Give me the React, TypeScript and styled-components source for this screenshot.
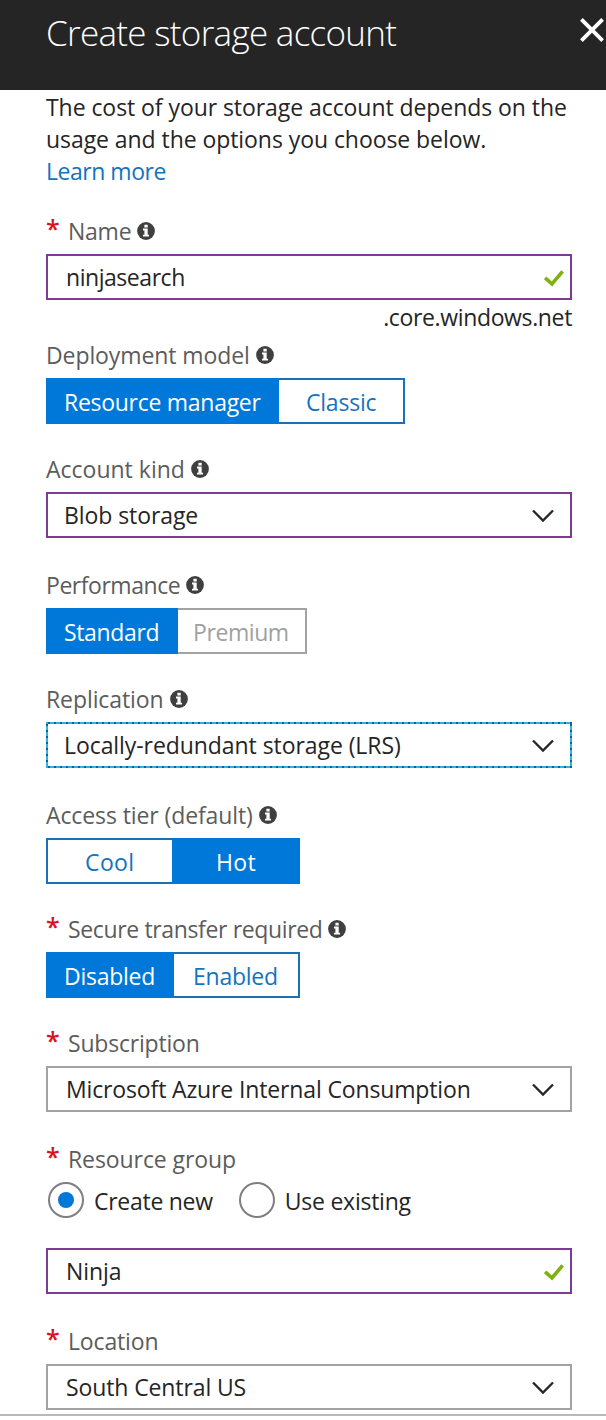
import React, { useState } from "react";
import styled, { createGlobalStyle, css } from "styled-components";

const GlobalStyle = createGlobalStyle`
  *, *::before, *::after { box-sizing: border-box; }
  body {
    margin: 0;
    background: #ffffff;
    color: #252525;
    font-family: "Open Sans", "Noto Sans", sans-serif;
    font-size: 23px;
    line-height: 32px;
  }
`;

const Blade = styled.div`
  width: 606px;
  height: 1420px;
  overflow: hidden;
  display: flex;
  flex-direction: column;
`;

const Header = styled.header`
  flex: none;
  height: 90px;
  padding: 8px 2px 0 46px;
  background: #252525;
  display: flex;
  justify-content: space-between;
  align-items: flex-start;
`;

const Title = styled.h1`
  margin: 0;
  font-size: 35px;
  font-weight: 300;
  line-height: 50px;
  letter-spacing: -0.7px;
  color: #ffffff;
`;

const CloseButton = styled.button`
  margin: 10px 0 0;
  padding: 0;
  border: 0;
  background: none;
  width: 24px;
  height: 24px;
  svg { display: block; }
`;

const Body = styled.main`
  flex: none;
  width: 572px;
  height: 1324px;
  padding: 1px 0 0 46px;
  display: flex;
  flex-direction: column;
`;

const Footer = styled.hr`
  flex: none;
  width: 100%;
  margin: 0;
  border: 0;
  height: 2px;
  background: #b9b9b9;
`;

const Text = styled.span<{ $track?: number }>`
  white-space: nowrap;
  letter-spacing: ${(p) => p.$track ?? 0}px;
`;

const Intro = styled.div`
  display: flex;
  flex-direction: column;
  align-items: flex-start;
  margin-bottom: 28px;
`;

const Link = styled.a`
  color: #1473bf;
  letter-spacing: -0.47px;
`;

const Field = styled.section<{ $gap: number }>`
  margin-bottom: ${(p) => p.$gap}px;
`;

const Label = styled.div`
  display: flex;
  height: 32px;
  margin-bottom: 7px;
  color: #5c5c5c;
  svg { flex: none; margin: 7px 0 0 6px; }
`;

const Required = styled.span`
  width: 22px;
  margin-top: -3px;
  color: #d8121f;
  font-size: 25px;
  font-weight: 600;
`;

type Tone = "edited" | "plain" | "focused";

const dashes = (angle: number) =>
  `repeating-linear-gradient(${angle}deg, #2bb3e3 0 2px, #17608c 2px 4px, #2bb3e3 4px 6px)`;

const Control = styled.div<{ $tone: Tone; $inset: number }>`
  height: 46px;
  display: flex;
  justify-content: space-between;
  align-items: center;
  padding: 0 6px 0 ${(p) => p.$inset}px;
  border: 2px solid ${(p) => (p.$tone === "edited" ? "#7f3a93" : "#a3a3a3")};
  ${(p) =>
    p.$tone === "focused" &&
    css`
      border-color: transparent;
      background:
        ${dashes(90)} top / 100% 2px no-repeat border-box,
        ${dashes(90)} bottom / 100% 2px no-repeat border-box,
        ${dashes(180)} left / 2px 100% no-repeat border-box,
        ${dashes(180)} right / 2px 100% no-repeat border-box;
    `}
  svg { flex: none; }
`;

const Arrow = styled.svg`
  margin: 2px 10px 0 0;
`;

const Suffix = styled.div`
  margin-top: 1px;
  text-align: right;
  letter-spacing: -0.36px;
`;

const Toggle = styled.div`
  display: flex;
  height: 46px;
`;

const Option = styled.button<{ $on?: boolean; $off?: boolean; $w: number; $first?: boolean; $pl?: number; $track?: number }>`
  width: ${(p) => p.$w}px;
  height: 46px;
  padding: 2px 0 0 ${(p) => p.$pl ?? 0}px;
  text-align: left;
  font: inherit;
  letter-spacing: ${(p) => p.$track ?? 0}px;
  white-space: nowrap;
  ${(p) =>
    p.$on
      ? css`
          border: 0;
          background: #0078d9;
          color: #ffffff;
        `
      : css`
          border: 2px solid ${p.$off ? "#a3a3a3" : "#1b71b8"};
          ${p.$first ? "border-right: 0;" : "border-left: 0;"}
          background: #ffffff;
          color: ${p.$off ? "#a0a0a0" : "#1473bf"};
        `}
`;

const Radios = styled.div`
  display: flex;
  align-items: center;
  height: 36px;
  padding-left: 2px;
  margin-bottom: 30px;
`;

const Radio = styled.label<{ $gap: number }>`
  display: flex;
  align-items: center;
  margin-right: ${(p) => p.$gap}px;
  span { padding-top: 2px; margin-left: 10px; }
`;

const Dot = styled.i<{ $on?: boolean }>`
  flex: none;
  width: 36px;
  height: 36px;
  border: 2px solid #7d7f82;
  border-radius: 50%;
  display: flex;
  align-items: center;
  justify-content: center;
  &::after {
    content: "";
    width: 16px;
    height: 16px;
    border-radius: 50%;
    background: ${(p) => (p.$on ? "#0078d7" : "transparent")};
  }
`;

const Info = () => (
  <svg width="18" height="18" viewBox="0 0 18 18">
    <circle cx="9" cy="9" r="8.9" fill="#3f3f3f" />
    <path d="M7.4 2.8h3.3v2.7H7.4zM6 6.6h4.7v6.2H12v1.8H6v-1.8h1.4V8.4H6z" fill="#fff" />
  </svg>
);

const CheckMark = styled.svg`
  margin-top: 2px;
`;

const Check = () => (
  <CheckMark width="20" height="17" viewBox="0 0 20 17">
    <path d="M1.2 7.8 8 14 18.6 1.4" fill="none" stroke="#7fb10f" strokeWidth="3.6" />
  </CheckMark>
);

const Chevron = () => (
  <Arrow width="22" height="14" viewBox="0 0 22 14">
    <path d="M1 1.5 11 11.5 21 1.5" fill="none" stroke="#252525" strokeWidth="2.3" />
  </Arrow>
);

interface LabelProps { text: string; track?: number; required?: boolean; info?: boolean }
const FieldLabel = ({ text, track, required, info }: LabelProps) => (
  <Label>
    {required && <Required>*</Required>}
    <Text $track={track}>{text}</Text>
    {info && <Info />}
  </Label>
);

interface BoxProps { text: string; track?: number; tone?: Tone; inset?: number }
const Select = ({ text, track, tone = "plain", inset = 18 }: BoxProps) => (
  <Control $tone={tone} $inset={inset}>
    <Text $track={track}>{text}</Text>
    <Chevron />
  </Control>
);
const Input = ({ text, track }: BoxProps) => (
  <Control $tone="edited" $inset={18}>
    <Text $track={track}>{text}</Text>
    <Check />
  </Control>
);

export default function App() {
  const [group, setGroup] = useState("new");
  return (
    <>
      <GlobalStyle />
      <Blade>
        <Header>
          <Title>Create storage account</Title>
          <CloseButton aria-label="Close">
            <svg width="24" height="24" viewBox="0 0 24 24">
              <path d="M1.4 1.4 22.6 22.6M22.6 1.4 1.4 22.6" stroke="#fff" strokeWidth="3.8" />
            </svg>
          </CloseButton>
        </Header>
        <Body>
          <Intro>
            <Text $track={-0.065}>The cost of your storage account depends on the</Text>
            <Text $track={-0.065}>usage and the options you choose below.</Text>
            <Link>Learn more</Link>
          </Intro>
          <Field $gap={6}>
            <FieldLabel text="Name" track={-0.25} required info />
            <Input text="ninjasearch" track={-0.45} />
            <Suffix>.core.windows.net</Suffix>
          </Field>
          <Field $gap={29}>
            <FieldLabel text="Deployment model" track={-0.1} info />
            <Toggle>
              <Option $on $w={233} $pl={18} $track={-0.28}>Resource manager</Option>
              <Option $w={126} $pl={27} $track={-0.22}>Classic</Option>
            </Toggle>
          </Field>
          <Field $gap={31}>
            <FieldLabel text="Account kind" track={0} info />
            <Select text="Blob storage" tone="edited" inset={16} track={-0.08} />
          </Field>
          <Field $gap={29}>
            <FieldLabel text="Performance" track={-0.46} info />
            <Toggle>
              <Option $on $w={132} $pl={18} $track={-0.35}>Standard</Option>
              <Option $off $w={129} $pl={15} $track={-0.42}>Premium</Option>
            </Toggle>
          </Field>
          <Field $gap={31}>
            <FieldLabel text="Replication" track={-0.09} info />
            <Select text="Locally-redundant storage (LRS)" tone="focused" inset={16} track={-0.07} />
          </Field>
          <Field $gap={29}>
            <FieldLabel text="Access tier (default)" track={-0.1} info />
            <Toggle>
              <Option $w={126} $first $pl={37} $track={0.4}>Cool</Option>
              <Option $on $w={128} $pl={44} $track={0.3}>Hot</Option>
            </Toggle>
          </Field>
          <Field $gap={29}>
            <FieldLabel text="Secure transfer required" track={-0.36} required info />
            <Toggle>
              <Option $on $w={128} $pl={18} $track={-0.25}>Disabled</Option>
              <Option $w={126} $pl={19} $track={-0.24}>Enabled</Option>
            </Toggle>
          </Field>
          <Field $gap={31}>
            <FieldLabel text="Subscription" track={-0.2} required />
            <Select text="Microsoft Azure Internal Consumption" track={-0.14} />
          </Field>
          <Field $gap={31}>
            <FieldLabel text="Resource group" track={-0.08} required />
            <Radios>
              <Radio $gap={26} onClick={() => setGroup("new")}>
                <Dot $on={group === "new"} />
                <Text $track={-0.27}>Create new</Text>
              </Radio>
              <Radio $gap={0} onClick={() => setGroup("existing")}>
                <Dot $on={group === "existing"} />
                <Text $track={-0.25}>Use existing</Text>
              </Radio>
            </Radios>
            <Input text="Ninja" track={-0.1} />
          </Field>
          <Field $gap={0}>
            <FieldLabel text="Location" track={-0.15} required />
            <Select text="South Central US" track={-0.11} />
          </Field>
        </Body>
        <Footer />
      </Blade>
    </>
  );
}
